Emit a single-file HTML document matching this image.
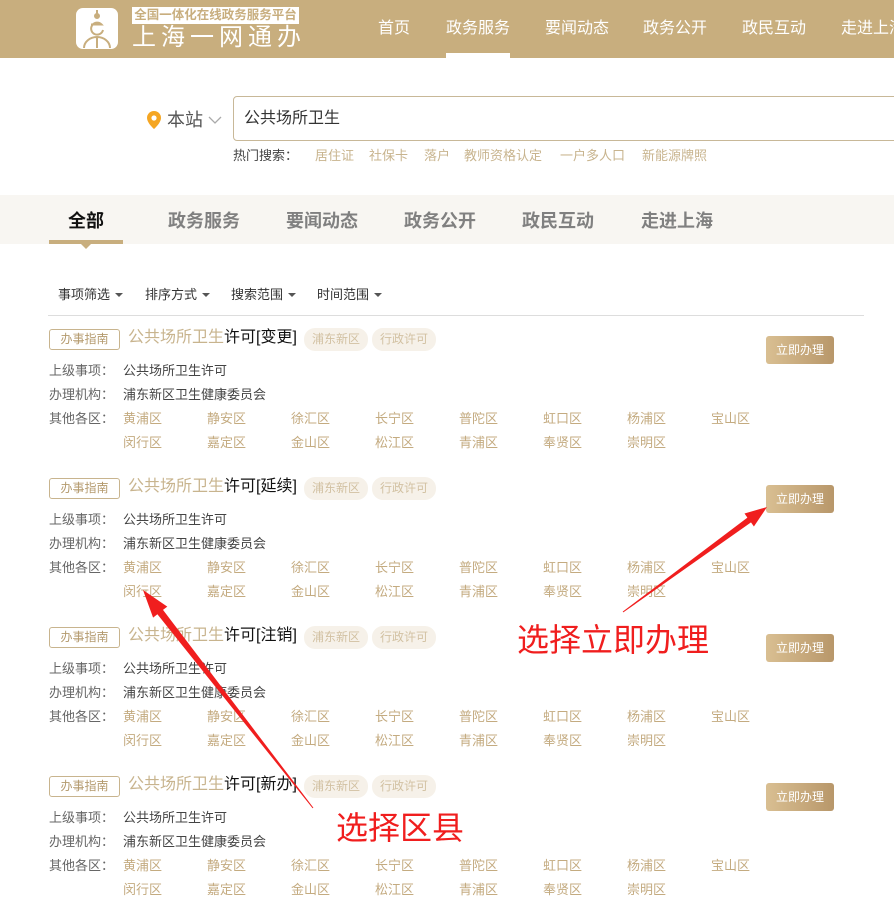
<!DOCTYPE html>
<html><head><meta charset="utf-8">
<style>
*{margin:0;padding:0;box-sizing:border-box}
body{width:894px;height:908px;overflow:hidden;background:#fff;font-family:"Liberation Sans","Noto Sans CJK SC",sans-serif;position:relative;color:#333}
.a{position:absolute;white-space:nowrap}
.hdr{position:absolute;left:0;top:0;width:894px;height:58px;background:#c8ae7e}
.nav{position:absolute;top:18px;font-size:16px;color:#fff;line-height:22px;white-space:nowrap}
.tabs{position:absolute;left:0;top:195px;width:894px;height:49px;background:#f8f6f2}
.tab{position:absolute;top:209px;font-size:18px;font-weight:bold;color:#808080;line-height:24px;white-space:nowrap}
.flt{position:absolute;top:286px;font-size:13px;color:#333;line-height:18px;white-space:nowrap}
.flt:after{content:"";display:inline-block;margin-left:5px;vertical-align:2px;border-left:4px solid transparent;border-right:4px solid transparent;border-top:4px solid #555}
.tag{position:absolute;left:49px;width:71px;height:21px;border:1px solid #c8b48e;border-radius:3px;font-size:12px;color:#b49a6e;text-align:center;line-height:19px}
.ttl{position:absolute;left:128px;font-size:16px;line-height:22px;color:#111;white-space:nowrap}
.ttl span{color:#c8b48e}
.chip{position:absolute;height:23px;width:64px;border-radius:11px;background:#f6f1e9;color:#d2c1a2;font-size:12px;text-align:center;line-height:23px}
.lbl{position:absolute;left:49px;font-size:13px;color:#666;line-height:18px;white-space:nowrap}
.val{position:absolute;left:123px;font-size:13px;color:#444;line-height:18px;white-space:nowrap}
.d{position:absolute;font-size:13px;color:#c4ab80;line-height:18px;white-space:nowrap}
.hs{position:absolute;top:147px;font-size:13px;line-height:18px;color:#c8b48e;white-space:nowrap}
.btn{position:absolute;left:766px;width:68px;height:28px;border-radius:3px;background:linear-gradient(90deg,#d9bf92,#b8976a);color:#fff;font-size:12px;text-align:center;line-height:28px}
.red{position:absolute;color:#f01e1e;font-size:32px;line-height:38px;white-space:nowrap}
</style></head><body>
<div class="hdr"></div>
<svg class="a" style="left:76px;top:8px" width="42" height="41" viewBox="0 0 42 41">
<rect width="42" height="41" rx="7" fill="#fff"/>
<g fill="none" stroke="#c8ae7e" stroke-width="2">
<line x1="21" y1="2" x2="21" y2="10"/><circle cx="21" cy="8" r="2" fill="#c8ae7e"/>
<path d="M27 22a6 6 0 1 1-1.5-5.5H15"/>
<path d="M8 40a13 11 0 0 1 26 0M21 29v11"/>
</g></svg>
<div class="a" style="left:132px;top:7px;width:167px;height:17px;background:#fff;color:#c8ae7e;font-size:12.5px;line-height:17px;text-align:center;font-weight:bold">全国一体化在线政务服务平台</div>
<div class="a" style="left:132px;top:25px;font-size:24px;line-height:26px;color:#fff;letter-spacing:5px">上海一网通办</div>
<div class="nav" style="left:378px">首页</div>
<div class="nav" style="left:446px">政务服务</div>
<div class="a" style="left:446px;top:53px;width:64px;height:5px;background:#fff"></div>
<div class="nav" style="left:545px">要闻动态</div>
<div class="nav" style="left:643px">政务公开</div>
<div class="nav" style="left:742px">政民互动</div>
<div class="nav" style="left:841px">走进上海</div>

<svg class="a" style="left:147px;top:111px" width="14" height="18" viewBox="0 0 14 18"><path d="M7 0a7 7 0 0 1 7 7c0 5-7 11-7 11S0 12 0 7a7 7 0 0 1 7-7z" fill="#f5a623"/><circle cx="7" cy="7" r="2.6" fill="#fff"/></svg>
<div class="a" style="left:167px;top:108px;font-size:18px;line-height:24px;color:#555">本站</div>
<svg class="a" style="left:208px;top:116px" width="14" height="9"><path d="M1 1l6 6 6-6" fill="none" stroke="#aaa" stroke-width="1.3"/></svg>
<div class="a" style="left:233px;top:96px;width:700px;height:45px;border:1px solid #c8b898;border-radius:4px"></div>
<div class="a" style="left:244px;top:108px;font-size:16px;line-height:22px;color:#333">公共场所卫生</div>
<div class="a" style="left:233px;top:147px;font-size:13px;line-height:18px;color:#444">热门搜索：</div>
<div class="hs" style="left:315px">居住证</div>
<div class="hs" style="left:369px">社保卡</div>
<div class="hs" style="left:424px">落户</div>
<div class="hs" style="left:464px">教师资格认定</div>
<div class="hs" style="left:560px">一户多人口</div>
<div class="hs" style="left:642px">新能源牌照</div>

<div class="tabs"></div>
<div class="tab" style="left:68px;color:#111">全部</div>
<div class="a" style="left:49px;top:240px;width:74px;height:4px;background:#c8ae7e"></div>
<div class="a" style="left:81px;top:244px;border-left:5px solid transparent;border-right:5px solid transparent;border-top:5px solid #c8ae7e"></div>
<div class="tab" style="left:168px">政务服务</div>
<div class="tab" style="left:286px">要闻动态</div>
<div class="tab" style="left:404px">政务公开</div>
<div class="tab" style="left:522px">政民互动</div>
<div class="tab" style="left:641px">走进上海</div>

<div class="flt" style="left:58px">事项筛选</div>
<div class="flt" style="left:145px">排序方式</div>
<div class="flt" style="left:231px">搜索范围</div>
<div class="flt" style="left:317px">时间范围</div>
<div class="a" style="left:48px;top:315px;width:816px;height:1px;background:#ddd"></div>

<div id="items"></div>

<div class="red" style="left:517px;top:621px">选择立即办理</div>
<div class="red" style="left:336px;top:809px">选择区县</div>
<svg class="a" style="left:0;top:0" width="894" height="908">
<polygon fill="#f01e1e" points="623.3,612.4 751,522.4 753.9,526.5 767,507 744.5,513.5 747.4,517.6 622.7,611.6"/>
<polygon fill="#f01e1e" points="313.4,807.7 163,609.9 167.3,606.6 143,590 153.1,617.6 157.4,614.3 312.6,808.3"/>
</svg>
<script>
var t=['变更','延续','注销','新办'],h='',D1=['黄浦区','静安区','徐汇区','长宁区','普陀区','虹口区','杨浦区','宝山区'],D2=['闵行区','嘉定区','金山区','松江区','青浦区','奉贤区','崇明区'];
for(var i=0;i<4;i++){var y=i*149;
h+='<div class="tag" style="top:'+(329+y)+'px">办事指南</div>';
h+='<div class="ttl" style="top:'+(327+y)+'px"><span>公共场所卫生</span>许可['+t[i]+']</div>';
h+='<div class="chip" style="left:304px;top:'+(328+y)+'px">浦东新区</div><div class="chip" style="left:372px;top:'+(328+y)+'px">行政许可</div>';
h+='<div class="btn" style="top:'+(336+y)+'px">立即办理</div>';
h+='<div class="lbl" style="top:'+(362+y)+'px">上级事项：</div><div class="val" style="top:'+(362+y)+'px">公共场所卫生许可</div>';
h+='<div class="lbl" style="top:'+(386+y)+'px">办理机构：</div><div class="val" style="top:'+(386+y)+'px">浦东新区卫生健康委员会</div>';
h+='<div class="lbl" style="top:'+(410+y)+'px">其他各区：</div>';
for(var j=0;j<8;j++)h+='<div class="d" style="left:'+(123+84*j)+'px;top:'+(410+y)+'px">'+D1[j]+'</div>';
for(var j=0;j<7;j++)h+='<div class="d" style="left:'+(123+84*j)+'px;top:'+(434+y)+'px">'+D2[j]+'</div>';
}
document.getElementById('items').outerHTML=h;
</script>
</body></html>
